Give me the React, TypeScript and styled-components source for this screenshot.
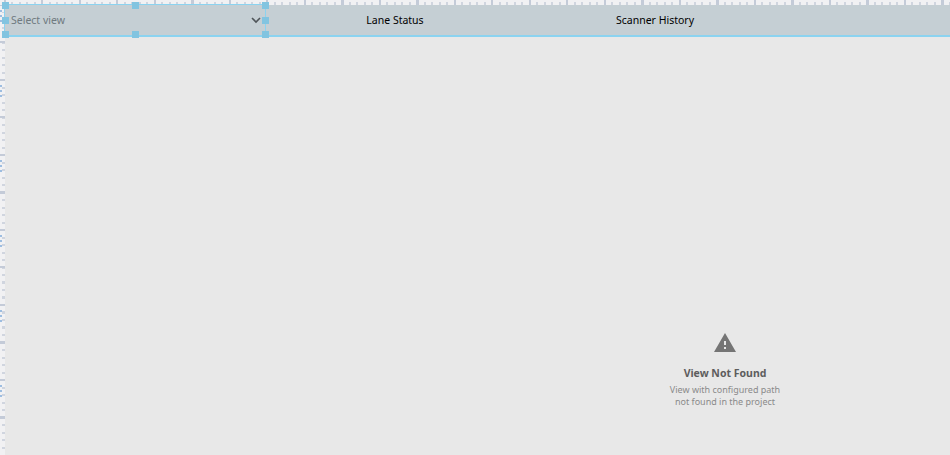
import React from "react";
import styled, { createGlobalStyle } from "styled-components";

const GlobalStyle = createGlobalStyle`
  html, body {
    margin: 0;
    padding: 0;
    height: 100%;
    overflow: hidden;
    background-color: #e8e8e8;
    font-family: "Noto Sans", sans-serif;
  }
  #root {
    height: 100%;
  }
`;

const Page = styled.div`
  height: 455px;
  width: 950px;
  display: flex;
  flex-direction: column;
  overflow: hidden;
`;

const TopRuler = styled.div`
  height: 5px;
  flex-shrink: 0;
  background-color: #f1f1f3;
  background-image:
    repeating-linear-gradient(90deg, #c4cbd8 0, #c4cbd8 2px, transparent 2px, transparent 37.5px),
    repeating-linear-gradient(90deg, #d0d5df 0, #d0d5df 2px, transparent 2px, transparent 7.5px);
  background-size: 100% 5px, 100% 3px;
  background-position: 4px 0, 4px 2px;
  background-repeat: no-repeat;
`;

const Workspace = styled.div`
  flex: 1;
  display: flex;
  min-height: 0;
`;

const LeftRuler = styled.div`
  width: 5px;
  flex-shrink: 0;
  background-color: #f1f1f3;
  background-image:
    repeating-linear-gradient(
      180deg,
      transparent 0,
      transparent 5px,
      #9dbde0 5px,
      #9dbde0 7px,
      transparent 7px,
      transparent 10px,
      #9dbde0 10px,
      #9dbde0 12px,
      transparent 12px,
      transparent 15px,
      #9dbde0 15px,
      #9dbde0 17px,
      transparent 17px,
      transparent 75px
    ),
    repeating-linear-gradient(180deg, #c4cbd8 0, #c4cbd8 2px, transparent 2px, transparent 37.5px),
    repeating-linear-gradient(180deg, #d0d5df 0, #d0d5df 2px, transparent 2px, transparent 7.5px);
  background-size: 2px 100%, 5px 100%, 3px 100%;
  background-position: 0 0, 0 -1px, 2px -1px;
  background-repeat: no-repeat;
`;

const Canvas = styled.div`
  flex: 1;
  display: flex;
  flex-direction: column;
  min-width: 0;
`;

const Header = styled.div`
  height: 30px;
  flex-shrink: 0;
  display: flex;
  background-color: #c5cfd4;
  border-bottom: 2px solid #8bd3f0;
`;

const ViewSelect = styled.div`
  position: relative;
  width: 260px;
  display: flex;
  align-items: center;
  justify-content: space-between;
  padding: 0 4px 0 6px;
  box-sizing: border-box;
  color: #6f7a80;
  font-size: 10.5px;
  outline: 1.5px solid #8bd3f0;
`;

const Chevron = styled.svg`
  width: 12px;
  height: 12px;
  fill: none;
  stroke: #4f5559;
  stroke-width: 1.6;
`;

const Handle = styled.span<{ $x: number; $y: number }>`
  position: absolute;
  left: ${(p) => p.$x}%;
  top: ${(p) => p.$y}%;
  width: 7px;
  height: 7px;
  margin: -3.5px 0 0 -3.5px;
  background-color: #82c4e0;
`;

const Tab = styled.div`
  width: 260px;
  display: flex;
  align-items: center;
  justify-content: center;
  padding-bottom: 1px;
  box-sizing: border-box;
  font-size: 10.5px;
  color: #000;
`;

const ViewArea = styled.div`
  flex: 1;
  display: grid;
  grid-template-columns: 1fr 450px;
  grid-template-rows: 1fr 170px;
`;

const NotFound = styled.div`
  grid-column: 2;
  grid-row: 2;
  display: flex;
  flex-direction: column;
  align-items: center;
  justify-content: center;
  padding-bottom: 2px;
  text-align: center;
`;

const WarningIcon = styled.svg`
  width: 24px;
  height: 24px;
  fill: #757575;
  margin-bottom: 10px;
`;

const NotFoundTitle = styled.div`
  font-size: 10.5px;
  font-weight: 700;
  color: #5d5d5d;
  line-height: 16px;
  margin-bottom: 3px;
`;

const NotFoundText = styled.div`
  font-size: 9px;
  line-height: 12px;
  color: #8a8a8a;
`;

const handles = [
  [0, 0],
  [50, 0],
  [100, 0],
  [0, 50],
  [100, 50],
  [0, 97],
  [50, 97],
  [100, 97]
];

export default function App() {
  return (
    <Page>
      <GlobalStyle />
      <TopRuler />
      <Workspace>
        <LeftRuler />
        <Canvas>
          <Header>
            <ViewSelect>
              Select view
              <Chevron viewBox="0 0 12 12">
                <path d="M3 4l4 4 4-4" />
              </Chevron>
              {handles.map(([x, y]) => (
                <Handle key={`${x}-${y}`} $x={x} $y={y} />
              ))}
            </ViewSelect>
            <Tab>Lane Status</Tab>
            <Tab>Scanner History</Tab>
          </Header>
          <ViewArea>
            <NotFound>
              <WarningIcon viewBox="0 0 24 24">
                <path d="M1 21h22L12 2 1 21zm12-3h-2v-2h2v2zm0-4h-2v-4h2v4z" />
              </WarningIcon>
              <NotFoundTitle>View Not Found</NotFoundTitle>
              <NotFoundText>
                View with configured path
                <br />
                not found in the project
              </NotFoundText>
            </NotFound>
          </ViewArea>
        </Canvas>
      </Workspace>
    </Page>
  );
}
